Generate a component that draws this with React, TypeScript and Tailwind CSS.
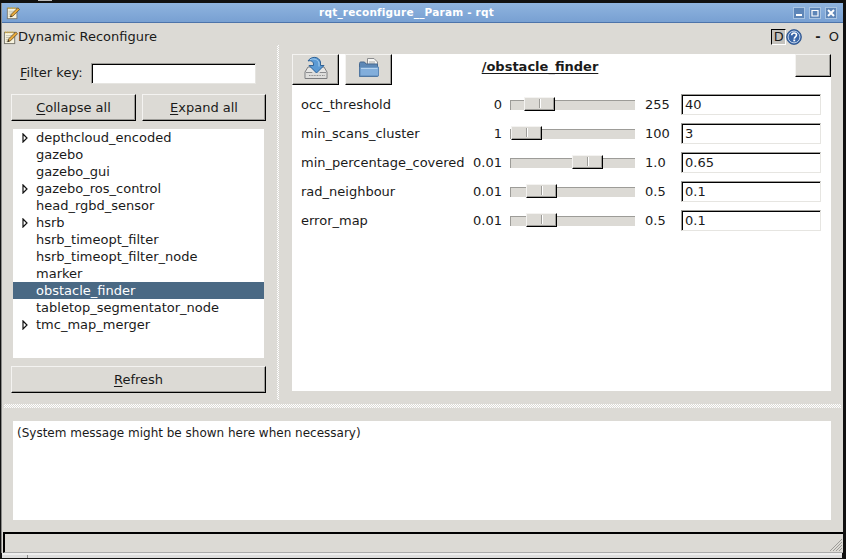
const font = "font-['DejaVu_Sans',sans-serif]";

function NoteIcon({ size = 16 }: { size?: number }) {
  return (
    <svg width={size} height={size} viewBox="0 0 16 16" className="shrink-0">
      <rect x="1.5" y="2.5" width="11" height="12" fill="#f7f3df" stroke="#77756c" />
      <path d="M2 2.5h10" stroke="#e0b030" strokeWidth="2" strokeDasharray="1 1" />
      <path d="M3 6h8M3 8h8M3 10h5M3 12h4" stroke="#c4c0ac" strokeWidth="1" />
      <path d="M5 12.5l1-3L13.5 2l2 2L8 11.5z" fill="#e8a93a" stroke="#5a4420" strokeWidth="0.8" />
      <path d="M5 12.5l.6-1.8 1.2 1.2z" fill="#222" />
    </svg>
  );
}

function TrayIcon() {
  return (
    <svg width="24" height="24" viewBox="0 0 24 24">
      <path d="M4 11L1 16V22.5H23V16L20 11H16L12 16L8 11Z" fill="#e6e6e4" stroke="#7d7e80" />
      <path d="M2 16.5H8L9 18.5H15L16 16.5H22" fill="#cfcfcd" stroke="#8b8c8e" />
      <rect x="2" y="17" width="20" height="5" fill="#dededc" />
      <path d="M5 19.5H17M18 19.5H21" stroke="#8f8f8f" strokeWidth="1" strokeDasharray="1 0.6" />
      <path d="M4 5C7 0 15 0 16.5 6V9.5H20L12.5 17L5 9.5H9.5V8C9.5 5.5 6.5 4 4 5Z" fill="#5b9ad4" stroke="#2f6398" />
      <path d="M6 3.8C9 2.2 14 3 15 7V10.5" fill="none" stroke="#a6cff0" />
    </svg>
  );
}

function FolderIcon() {
  return (
    <svg width="22" height="20" viewBox="0 0 22 20">
      <path d="M9.5 0.5H16L19.5 4V10H9.5Z" fill="#f6f6f4" stroke="#8b8c8e" />
      <path d="M11 4H17M11 6H17M11 8H17" stroke="#a8a8a8" />
      <path d="M1.5 5.5C1.5 4.5 2 4 3 4H6.5L8 6H19.5V18.5H1.5Z" fill="#5d88b6" stroke="#46688f" />
      <path d="M2 9H20.5V18H2Z" fill="#82aedb" stroke="#5d88b6" />
      <path d="M3 10.5H19.5" stroke="#b4d2ee" />
    </svg>
  );
}

function HelpIcon() {
  return (
    <svg width="16" height="16" viewBox="0 0 16 16">
      <circle cx="8" cy="8" r="7.4" fill="#3a66a8" stroke="#234b85" strokeWidth="0.8" />
      <circle cx="8" cy="8" r="5.9" fill="none" stroke="#c5d5ea" strokeWidth="1" />
      <path d="M5.7 6.2C5.8 4.7 6.8 4 8.1 4c1.5 0 2.4.9 2.4 2 0 1.9-2.2 1.8-2.2 3.7" fill="none" stroke="#fff" strokeWidth="1.6" />
      <rect x="7.3" y="10.5" width="1.9" height="1.8" fill="#fff" />
    </svg>
  );
}

function WinBtn({ kind }: { kind: "min" | "max" | "close" }) {
  return (
    <div className="w-[12px] h-[12px] bg-[#5e86b8] border border-[#a9c4e2] flex items-center justify-center">
      <svg width="8" height="8" viewBox="0 0 8 8">
        {kind === "min" && <rect x="1" y="5" width="6" height="2" fill="#fff" />}
        {kind === "max" && <path d="M1 1.5H7V7H1Z" fill="none" stroke="#fff" strokeWidth="1.2" />}
        {kind === "close" && <path d="M1 1L7 7M7 1L1 7" stroke="#fff" strokeWidth="2" />}
      </svg>
    </div>
  );
}

const raised =
  "bg-[#dcdad5] border-t border-l border-t-[#f4f3f1] border-l-[#f4f3f1] border-b border-r border-b-black border-r-black shadow-[inset_-1px_-1px_0_#9d9c98]";
const sunken =
  "bg-white border-t border-l border-t-[#9d9c98] border-l-[#9d9c98] border-b border-r border-b-[#e6e5e1] border-r-[#e6e5e1] shadow-[inset_1px_1px_0_#000]";

function Btn({ u, rest, cls }: { u: string; rest: string; cls: string }) {
  return (
    <div className={`${raised} ${cls} flex items-center justify-center text-[13px] text-[#1a1a1a]`}>
      <span><span className="underline underline-offset-2">{u}</span>{rest}</span>
    </div>
  );
}

const tree: [string, boolean][] = [
  ["depthcloud_encoded", true],
  ["gazebo", false],
  ["gazebo_gui", false],
  ["gazebo_ros_control", true],
  ["head_rgbd_sensor", false],
  ["hsrb", true],
  ["hsrb_timeopt_filter", false],
  ["hsrb_timeopt_filter_node", false],
  ["marker", false],
  ["obstacle_finder", false],
  ["tabletop_segmentator_node", false],
  ["tmc_map_merger", true],
];

const params = [
  { name: "occ_threshold", min: "0", max: "255", val: "40", pos: 13 },
  { name: "min_scans_cluster", min: "1", max: "100", val: "3", pos: 0 },
  { name: "min_percentage_covered", min: "0.01", max: "1.0", val: "0.65", pos: 61 },
  { name: "rad_neighbour", min: "0.01", max: "0.5", val: "0.1", pos: 15 },
  { name: "error_map", min: "0.01", max: "0.5", val: "0.1", pos: 15 },
];

function Slider({ pos }: { pos: number }) {
  return (
    <div className="relative w-[125px] h-[10px] bg-[#dcdad5] border-t border-l border-t-[#9d9c98] border-l-[#9d9c98]">
      <div
        className={`absolute top-[-4px] w-[31px] h-[14px] ${raised} flex items-center justify-center`}
        style={{ left: pos }}
      >
        <div className="w-[2px] h-[9px] border-l border-l-[#9d9c98] border-r border-r-white" />
      </div>
    </div>
  );
}

export default function App() {
  return (
    <div className={`${font} w-[846px] h-[559px] bg-[#111] overflow-hidden flex flex-col text-[#1a1a1a] text-[13px]`}>
      <div className="h-[3px] shrink-0 flex">
        <div className="ml-[38px] w-[14px] h-[1px] bg-[#bbb]" />
      </div>
      <div className="w-[842px] h-[550px] ml-[1px] border-l-[1px] border-l-[#8a8a88] flex flex-col bg-[#dcdad5]">
        <div className="h-[20px] shrink-0 bg-gradient-to-b from-[#8fb4df] to-[#78a0d2] border-b border-b-[#4d74aa] flex items-center px-[4px]">
          <NoteIcon size={14} />
          <div className="flex-1 text-center text-white font-bold text-[10.5px] tracking-[0.2px]">rqt_reconfigure__Param - rqt</div>
          <div className="flex gap-[4px] pr-[2px]">
            <WinBtn kind="min" />
            <WinBtn kind="max" />
            <WinBtn kind="close" />
          </div>
        </div>

        <div className="h-[22px] shrink-0 flex items-center pl-[1px] pr-[4px] mt-[2px] pt-[2px]">
          <NoteIcon size={15} />
          <span className="text-[13px]">Dynamic Reconfigure</span>
          <div className="flex-1" />
          <div className="w-[15px] h-[16px] bg-[#c4c2bd] border-t border-l border-black text-[13px] leading-[14px] text-center border-r border-b border-r-white border-b-white">D</div>
          <HelpIcon />
          <span className="ml-[13px] font-bold">-</span>
          <span className="ml-[8px]">O</span>
        </div>

        <div className="flex h-[359px] shrink-0 mt-[-2px]">
          <div className="w-[265px] ml-[9px] shrink-0 flex flex-col pt-[17px]">
            <div className="flex items-center h-[22px] pl-[9px]">
              <span><span className="underline underline-offset-2">F</span>ilter key:</span>
              <div className={`${sunken} ml-[8px] w-[165px] h-[21px]`} />
            </div>
            <div className="flex gap-[6px] mt-[10px]">
              <Btn u="C" rest="ollapse all" cls="w-[125px] h-[27px]" />
              <Btn u="E" rest="xpand all" cls="w-[124px] h-[27px]" />
            </div>
            <div className="ml-[2px] mt-[8px] w-[251px] h-[229px] bg-white">
              {tree.map(([t, arrow]) => {
                const sel = t === "obstacle_finder";
                return (
                  <div key={t} className={`h-[17px] flex items-center ${sel ? "bg-[#4a6984] text-white" : ""}`}>
                    <div className="w-[23px] pl-[9px] shrink-0 flex items-center">
                      {arrow && (
                        <svg width="6" height="10" viewBox="0 0 6 10">
                          <path d="M1 1L5 5L1 9Z" fill="#fff" stroke="#111" strokeWidth="1.2" />
                        </svg>
                      )}
                    </div>
                    <span>{t}</span>
                  </div>
                );
              })}
            </div>
            <Btn u="R" rest="efresh" cls="w-[255px] h-[27px] mt-[8px]" />
          </div>

          <div className="w-[2px] ml-[1px] shrink-0 bg-[repeating-conic-gradient(#fff_0_25%,#dcdad5_0_50%)] bg-[length:2px_2px] h-[355px]" />

          <div className="ml-[13px] mt-[9px] w-[539px] h-[337px] bg-white relative shrink-0">
            <div className="flex">
              <div className={`${raised} w-[47px] h-[31px] pb-[3px] flex items-center justify-center`}><TrayIcon /></div>
              <div className={`${raised} w-[47px] h-[31px] pb-[4px] ml-[6px] flex items-center justify-center`}><FolderIcon /></div>
              <div className="flex-1 text-center font-bold underline underline-offset-2 pt-[3px] pr-[107px]">/obstacle_finder</div>
              <div className={`${raised} w-[36px] h-[23px]`} />
            </div>
            <div className="mt-[9px] flex flex-col gap-[8px]">
              {params.map((p) => (
                <div key={p.name} className="flex items-center h-[21px]">
                  <div className="w-[167px] pl-[9px] shrink-0 whitespace-nowrap">{p.name}</div>
                  <div className="w-[43px] text-right shrink-0">{p.min}</div>
                  <div className="ml-[8px] shrink-0"><Slider pos={p.pos} /></div>
                  <div className="w-[46px] pl-[10px] shrink-0">{p.max}</div>
                  <div className={`${sunken} w-[140px] h-[21px] pl-[3px] leading-[19px]`}>{p.val}</div>
                </div>
              ))}
            </div>
          </div>
        </div>

        <div className="h-[4px] mx-[2px] shrink-0 bg-[repeating-conic-gradient(#fff_0_25%,#dcdad5_0_50%)] bg-[length:2px_2px]" />

        <div className="ml-[11px] mt-[13px] w-[818px] h-[99px] bg-white shrink-0 pl-[4px] pt-[3px] text-[12px]">
          (System message might be shown here when necessary)
        </div>

        <div className="mt-[12px] ml-[1px] flex-1 border-t-2 border-l-2 border-t-black border-l-black border-b-[#aaa] border-b relative">
          <svg width="14" height="14" viewBox="0 0 14 14" className="absolute right-0 bottom-0">
            <path d="M13 1L1 13M13 4L4 13M13 7L7 13M13 10L10 13" stroke="#9d9c98" strokeWidth="1" />
          </svg>
        </div>
      </div>
      <div className="flex-1 flex ml-[2px] w-[840px] border-t-2 border-t-[#eee]">
        <div className="w-[26px] h-[3px] border-r border-r-[#888] bg-[#ddd]" />
        <div className="flex-1 h-[3px] bg-[#ddd]" />
      </div>
    </div>
  );
}
